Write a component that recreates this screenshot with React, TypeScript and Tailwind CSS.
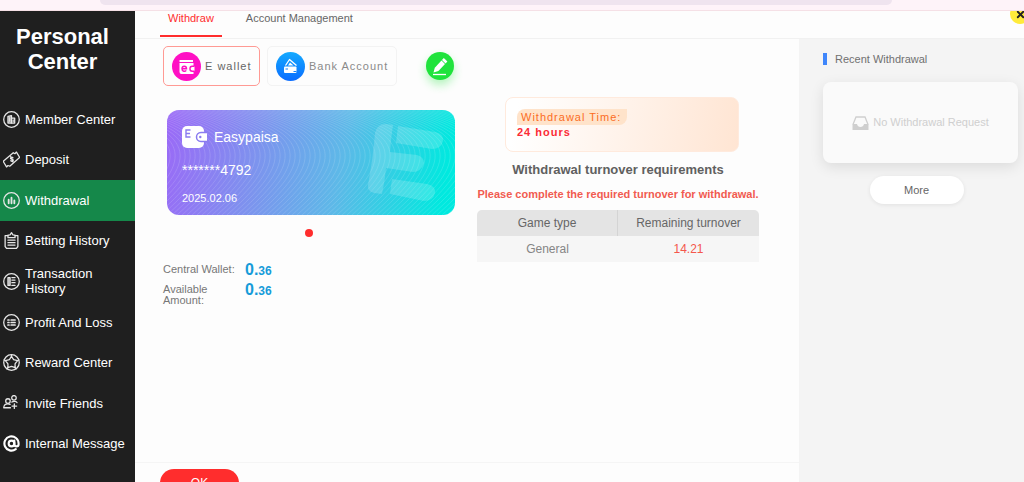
import type { ReactNode } from 'react';
import { AtSign, X } from 'lucide-react';

const iconProps = {
  viewBox: '0 0 24 24',
  fill: 'none',
  stroke: 'currentColor',
  strokeWidth: 1.8,
  strokeLinecap: 'round' as const,
  strokeLinejoin: 'round' as const,
  className: 'size-[17px] shrink-0 text-[#e6e6e6]',
};

function Ring({ children }: { children: ReactNode }) {
  return (
    <svg {...iconProps}>
      <circle cx="12" cy="12" r="11" />
      {children}
    </svg>
  );
}

const MENU = [
  {
    label: 'Member Center',
    icon: (
      <Ring>
        <path d="M7 17V7.500l5-1V17z" fill="currentColor" fillOpacity=".55" />
        <path d="M12 10h4.500v7H12M9.500 9.500v5M14.300 12.500v2.500" />
      </Ring>
    ),
  },
  {
    label: 'Deposit',
    icon: (
      <svg {...iconProps}>
        <path d="M.8 14 14.500 2.500l2.300 1.300L19 1.500 23.500 9 9.500 21.500 7 20.500l-2 2L.8 15.500z" />
        <path d="M14 9.500c-1.500-1.500-4-.2-3.200 1.400.7 1.300 2.700 0 3.500 1.400.8 1.700-1.800 3-3.300 1.500M10.800 8l3.400 7.500" />
      </svg>
    ),
  },
  {
    label: 'Withdrawal',
    icon: (
      <Ring>
        <path d="M8 11v5M12 8v8M16 12v4" strokeWidth="2.600" />
      </Ring>
    ),
  },
  {
    label: 'Betting History',
    icon: (
      <svg {...iconProps}>
        <path d="M7 5H3v15.500L5 23h14l2-2.500V5h-4" />
        <path d="M7 8V4.500L10 4l2-3 2 3 3 .5V8zM7 11.500h10M7 15h10M7 18.500h10" />
      </svg>
    ),
  },
  {
    label: 'Transaction History',
    icon: (
      <Ring>
        <path d="M7 6.500h3v11H7z" fill="currentColor" fillOpacity=".6" />
        <path d="M12.500 6.500h4.500M12.500 10h4.500M12.500 13.700h4.500M12.500 17.500h4.500" />
      </Ring>
    ),
  },
  {
    label: 'Profit And Loss',
    icon: (
      <Ring>
        <path d="M7 8.500h1.500M7 12h1.500M7 15.500h1.500M11.500 8.500H17M11.500 12H17M11.500 15.500H17" strokeWidth="2.400" />
      </Ring>
    ),
  },
  {
    label: 'Reward Center',
    icon: (
      <Ring>
        <path d="m12 3.500 3 4.300 5.500 1.500-3.500 4.500.2 5.500-5.200-1.800-5.200 1.800.2-5.500-3.500-4.500L9 7.800z" />
        <path d="M12 1v2.500M20.500 9.300l2-.8M17.200 19.300l1.300 2M6.800 19.300l-1.300 2M3.500 9.300l-2-.8" />
      </Ring>
    ),
  },
  {
    label: 'Invite Friends',
    icon: (
      <svg {...iconProps}>
        <circle cx="7" cy="8.500" r="3.200" />
        <circle cx="15.500" cy="4" r="3.200" />
        <path d="M10.500 18H1c.3-3.500 2.500-5.500 6-5.500 1.200 0 2 .2 3 .7M12.500 10c2-1.600 6.500-1.500 7.300.8M16 12.500v6.500M12.700 15.700h6.600" />
      </svg>
    ),
  },
  {
    label: 'Internal Message',
    icon: <AtSign className="size-[17px] shrink-0 text-white" strokeWidth={3} />,
  },
];

function Sidebar() {
  return (
    <aside className="w-[135px] shrink-0 bg-[#1f1f1f] text-white">
      <h1 className="pt-[13px] pr-[10px] text-center text-[22px] leading-[25px] font-bold">
        Personal
        <br />
        Center
      </h1>
      <nav className="mt-[25px] grid h-[365px] auto-rows-fr">
        {MENU.map((item) => (
          <a
            key={item.label}
            href="#"
            className={`flex items-center gap-[5px] pr-2 pl-[3px] text-[13px] leading-[15px] ${
              item.label === 'Withdrawal' ? 'bg-[#15884a]' : ''
            }`}
          >
            {item.icon}
            {item.label}
          </a>
        ))}
      </nav>
    </aside>
  );
}

function Tabs() {
  return (
    <div className="relative flex h-7 shrink-0 items-start gap-4 overflow-hidden border-b border-[#f1f1f1] pl-[25px] text-[11px] leading-[14px]">
      <button className="border-b-2 border-[#ff2d2d] px-2 pb-[10px] text-[#ff2d2d]">Withdraw</button>
      <button className="px-2 text-[#666]">Account Management</button>
      <button
        aria-label="Close"
        className="absolute -top-[7px] -right-[6px] flex size-5 items-center justify-center rounded-full bg-[#ffeb3b] text-[#222]"
      >
        <X className="size-[11px]" strokeWidth={4} />
      </button>
    </div>
  );
}

function MethodPicker() {
  return (
    <div className="flex items-center pt-[7px] text-[11px] tracking-[1px]">
      <button className="flex h-10 w-[97px] items-center gap-1 rounded-[5px] border border-[#ff9a94] pl-2 text-[#666]">
        <svg viewBox="0 0 29 29" className="size-[29px] shrink-0">
          <circle cx="14.500" cy="14.500" r="14.500" fill="#ff10c4" />
          <path d="M7.500 8h13.500v2h-13.500zM7.500 11h14v11h-12a2 2 0 0 1-2-2z" fill="#fff" />
          <path d="M10 16.800h4.500c0-3.500-4.500-3.500-4.500 0 0 2.900 3.200 3.100 4.200 1.500" fill="none" stroke="#ff10c4" strokeWidth="1.500" />
          <path d="M22.500 14.200h-2.300c-3 0-3 5 0 5h2.300" fill="#fff" stroke="#ff10c4" strokeWidth="1.400" />
        </svg>
        E wallet
      </button>
      <button className="ml-[7px] flex h-10 w-[130px] items-center gap-1 rounded-[5px] border border-[#f3f3f3] pl-2 text-[#8a8a8a]">
        <svg viewBox="0 0 29 29" className="size-[29px] shrink-0">
          <defs>
            <linearGradient id="bank" x1="0" y1="0" x2="0" y2="1">
              <stop offset="0" stopColor="#14aaff" />
              <stop offset="1" stopColor="#0a6cff" />
            </linearGradient>
          </defs>
          <circle cx="14.500" cy="14.500" r="14.500" fill="url(#bank)" />
          <path d="m9.500 13.500 4-6 7 6" fill="none" stroke="#fff" strokeWidth="1.300" strokeLinejoin="round" />
          <path d="m12 13.500 2-3 3.500 3z" fill="#fff" />
          <rect x="8" y="14.500" width="12.500" height="6.500" rx="1" fill="#fff" />
          <path d="M9.500 17h2.500M17.500 19.500h3" stroke="#1683ff" />
        </svg>
        Bank Account
      </button>
      <button aria-label="Edit" className="ml-[29px] size-7 rounded-full bg-[#20e33c] shadow-[0_5px_10px_#20e33c55]">
        <svg viewBox="0 0 28 28" className="size-7">
          <path d="m7.500 20.500 1.300-4.800L17.800 6l3.600 3.500-9 9.500z" fill="#fff" />
          <path d="m15.500 8 4 4" stroke="#20e33c" />
          <path d="M7 22.500h13" stroke="#fff" strokeWidth="1.300" />
        </svg>
      </button>
    </div>
  );
}

function WalletCard() {
  const waves = Array.from({ length: 84 }, (_, i) => i * 5);
  return (
    <div className="relative mt-6 ml-1 overflow-hidden rounded-xl bg-linear-[100deg,#9b69f7,#7d93ee_32%,#5db9e8_60%,#00e9df_95%] px-[15px] pt-[15px] pb-[10px] text-white">
      <svg viewBox="0 0 288 105" preserveAspectRatio="none" className="absolute inset-0 size-full">
        <g fill="none" stroke="#fff" strokeOpacity=".14">
          {waves.map((x) => (
            <path key={x} d={`M${x - 90} 0C${x + 15} 25 ${x - 10} 60 ${x - 60} 105`} />
          ))}
        </g>
        <g fill="#fff" fillOpacity=".17">
          <path d="M219 14 226 15Q224 28 223 42L250 45Q257 47 257 53 254 62 246 62L219 58Q218 70 215 84L207 83Q200 81 201 75 206 48 208 23 210 14 219 14z" />
          <path d="m231 16 37 6q9 2 8 9-2 8-11 8l-36-6zM225 69l35 5q9 2 8 9-2 8-11 8l-34-7z" />
        </g>
      </svg>
      <div className="relative flex h-6 items-center gap-[7px]">
        <svg viewBox="0 0 25 22" className="h-[22px] w-[25px]">
          <rect width="22" height="22" rx="5" fill="#fff" />
          <path d="M8.500 4H4v7h4.500M4 7.500h4" fill="none" stroke="#8a7bf0" strokeWidth="1.400" />
          <path d="M25 6.500h-6c-6 0-6 9 0 9h6" fill="#fff" stroke="#8a7bf0" strokeWidth="1.500" />
          <circle cx="18.300" cy="11" r="1.200" fill="#8a7bf0" />
        </svg>
        <span className="text-[14px]">Easypaisa</span>
      </div>
      <p className="relative mt-3 text-[14px] leading-[18px]">*******4792</p>
      <p className="relative mt-3 text-[11px] leading-[14px]">2025.02.06</p>
    </div>
  );
}

function Balance({ label }: { label: string }) {
  return (
    <div className="flex gap-[7px]">
      <dt className="w-[75px] pt-[3px] leading-[11px]">{label}</dt>
      <dd className="text-[12px] leading-[18px] font-bold text-[#169bd9]">
        <span className="text-[16px]">0.</span>36
      </dd>
    </div>
  );
}

function Turnover() {
  return (
    <section className="flex min-w-0 flex-1 flex-col pt-[58px]">
      <div className="mr-5 ml-7 h-[55px] rounded-lg border border-[#ffeadd] bg-linear-[100deg,#fff_5%,#ffe5d3] px-[11px] pt-[11px] text-[11px] tracking-[1px]">
        <p className="w-[110px] rounded-tl-lg rounded-br-lg bg-[#ffe3ca] pl-1 leading-4 text-[#fb6d1f]">Withdrawal Time:</p>
        <p className="leading-[14px] font-bold text-[#fb2c36]">24 hours</p>
      </div>
      <h2 className="mt-[10px] text-center text-[13px] leading-4 font-bold text-[#606060]">Withdrawal turnover requirements</h2>
      <p className="mt-2 text-center text-[11px] leading-4 font-bold whitespace-nowrap text-[#f15b50]">
        Please complete the required turnover for withdrawal.
      </p>
      <table className="mt-2 w-full table-fixed border-separate border-spacing-0 overflow-hidden rounded-t-[5px] text-center text-[12px]">
        <thead className="bg-[#e4e4e4] text-[#666]">
          <tr className="h-[26px]">
            <th className="border-r border-[#d4d4d4] font-normal">Game type</th>
            <th className="font-normal">Remaining turnover</th>
          </tr>
        </thead>
        <tbody className="bg-[#f6f6f6]">
          <tr className="h-[26px]">
            <td className="text-[#858585]">General</td>
            <td className="text-[#f4574c]">14.21</td>
          </tr>
        </tbody>
      </table>
    </section>
  );
}

function RecentWithdrawal() {
  return (
    <aside className="flex w-[225px] shrink-0 flex-col bg-[#f4f4f4] pt-[13px] pr-[6px] pl-6 text-[11px]">
      <h2 className="flex items-center gap-2 leading-[14px] text-[#707070]">
        <span className="h-3 w-1 bg-[#3f86fb]" />
        Recent Withdrawal
      </h2>
      <div className="mt-4 flex h-[81px] items-center justify-center gap-1 rounded-lg bg-[#fafafa] text-[#cfcfcf] shadow-[0_4px_14px_#0000001a]">
        <svg viewBox="0 0 17 16" className="h-4 w-[17px]">
          <path d="M1 9.500 4 2h9l3 7.500" fill="none" stroke="currentColor" strokeWidth="1.300" />
          <path d="M.5 9H5c.5 4 6.500 4 7 0h4.500v6H.5z" fill="currentColor" />
        </svg>
        No Withdrawal Request
      </div>
      <button className="mt-[13px] mr-2 h-7 w-[94px] self-center rounded-full bg-white text-[#666] shadow-[0_1px_4px_#00000014]">
        More
      </button>
    </aside>
  );
}

export default function App() {
  return (
    <div className="flex h-screen flex-col overflow-hidden bg-[#fdfdfd] font-['Liberation_Sans',Arial,sans-serif]">
      <div className="h-[11px] shrink-0 border-b border-[#f5e0e6] bg-[#fef3f9] pr-[132px] pl-[100px]">
        <div className="h-[5px] rounded-b-lg bg-[#efe4ef]" />
      </div>
      <div className="flex min-h-0 flex-1">
        <Sidebar />
        <div className="flex min-w-0 flex-1 flex-col">
          <Tabs />
          <div className="flex min-h-0 flex-1">
            <main className="flex min-w-0 flex-1 flex-col">
              <div className="flex min-h-0 flex-1 gap-[22px] pr-10 pl-7">
                <section className="w-[292px] shrink-0">
                  <MethodPicker />
                  <WalletCard />
                  <div className="mt-[14px] mb-6 flex justify-center">
                    <span className="size-2 rounded-full bg-[#ff2d2d]" />
                  </div>
                  <dl className="flex flex-col gap-[1px] text-[11px] text-[#777]">
                    <Balance label="Central Wallet:" />
                    <Balance label="Available Amount:" />
                  </dl>
                </section>
                <Turnover />
              </div>
              <footer className="h-5 shrink-0 overflow-hidden border-t border-[#f5f5f5] pt-[6px] pl-[25px]">
                <button className="h-7 w-[79px] rounded-full bg-[#ff2d2d] text-[12px] text-white">OK</button>
              </footer>
            </main>
            <RecentWithdrawal />
          </div>
        </div>
      </div>
    </div>
  );
}
